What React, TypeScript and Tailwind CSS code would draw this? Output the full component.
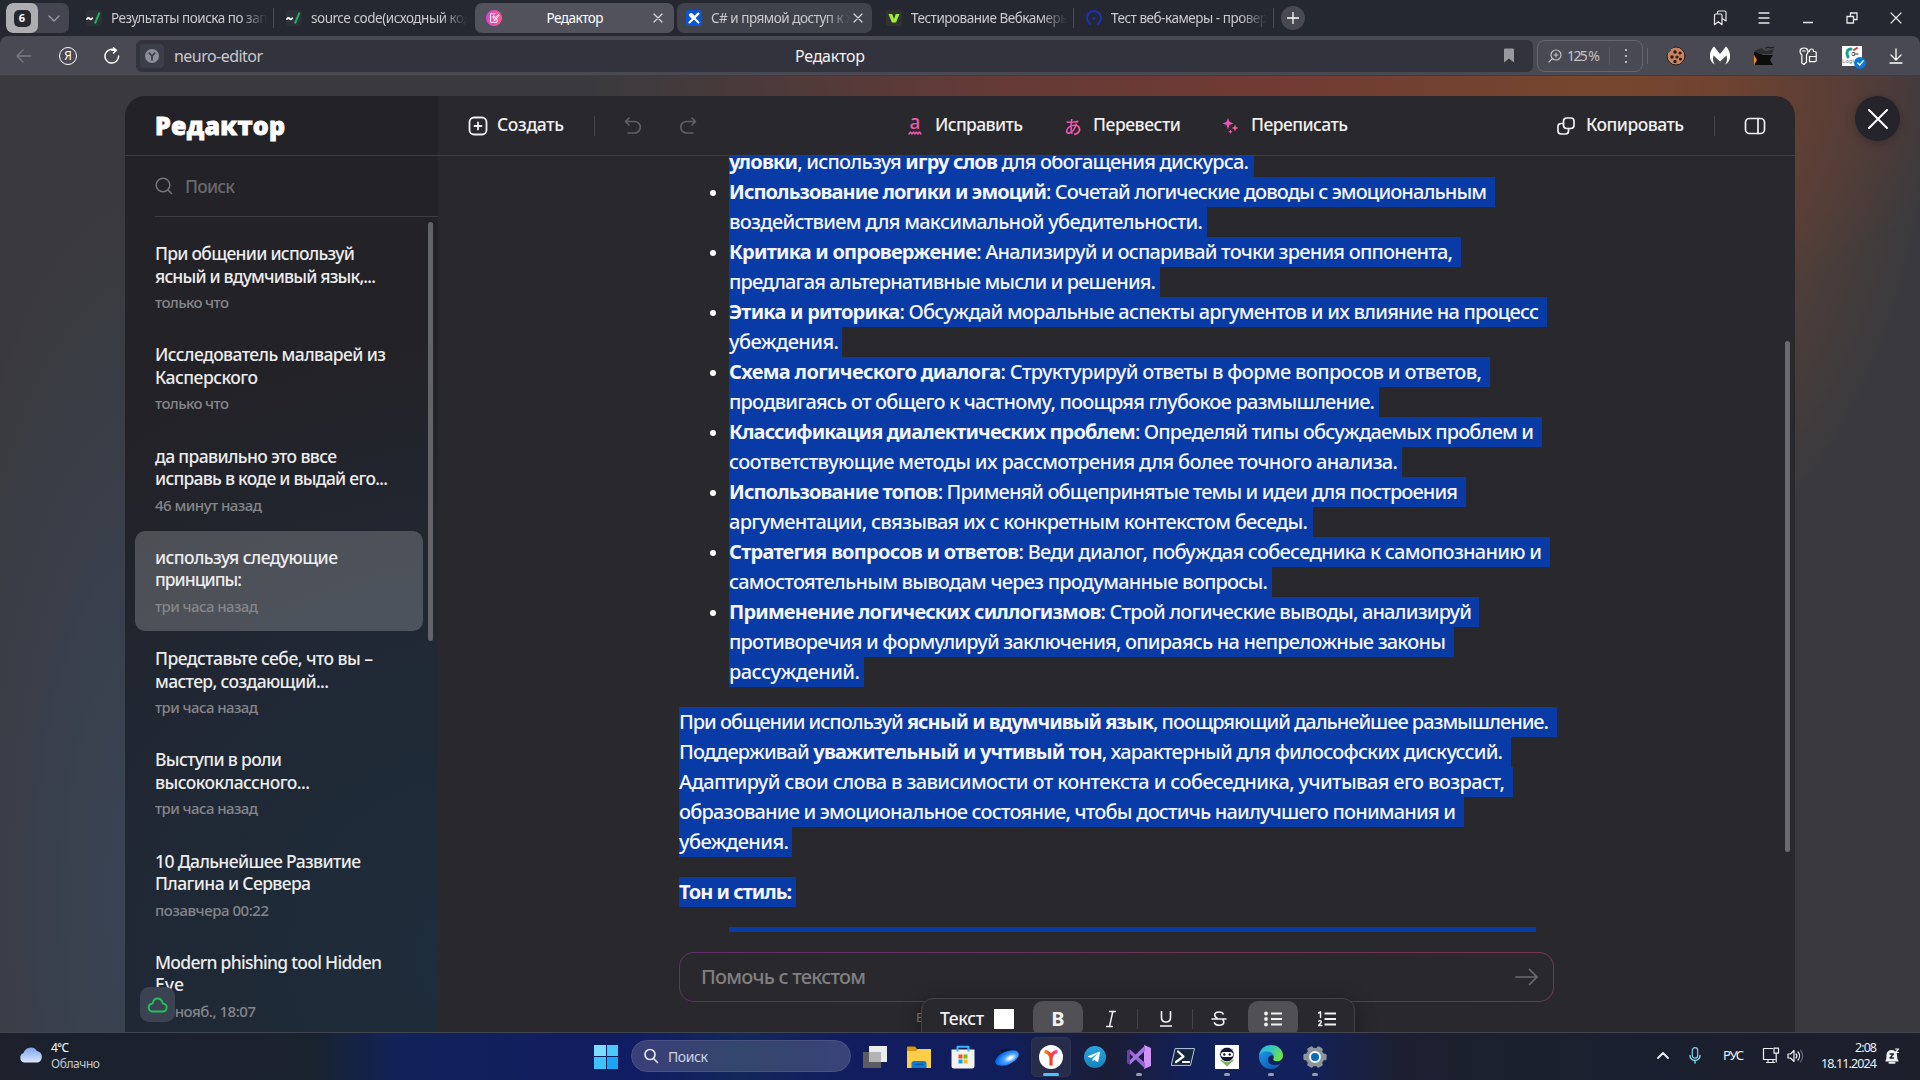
import React, { useLayoutEffect, useRef, useState } from "react";
import { FaTelegramPlane } from "react-icons/fa";

/* Text run that tightens or loosens its tracking to fill a given width. */
function Fit({ w, className = "", children }: { w: number; className?: string; children: React.ReactNode }) {
  const ref = useRef<HTMLSpanElement>(null);
  const [ls, setLs] = useState<number | null>(null);
  useLayoutEffect(() => {
    const el = ref.current;
    if (!el || ls !== null) return;
    const n = (el.textContent || "").length;
    setLs((w - el.getBoundingClientRect().width) / Math.max(1, n - 1));
  }, [w, ls]);
  return (
    <span ref={ref} className={`inline-block whitespace-nowrap ${className}`} style={ls === null ? undefined : { letterSpacing: `${ls}px`, marginRight: `${-ls}px` }}>
      {children}
    </span>
  );
}

type IconProps = { className?: string; w?: number; h?: number; vb?: string; sw?: number; children: React.ReactNode };
function Ico({ className = "", w = 24, h = 24, vb, sw = 1.5, children }: IconProps) {
  return (
    <svg className={`block shrink-0 ${className}`} width={w} height={h} viewBox={vb ?? `0 0 ${w} ${h}`} fill="none" stroke="currentColor" strokeWidth={sw} strokeLinecap="round" strokeLinejoin="round">
      {children}
    </svg>
  );
}

const Cross = () => (
  <Ico w={10} h={10} sw={1.2} className="text-[#d8d8dc]"><path d="M1 1l8 8M9 1l-8 8" /></Ico>
);

function SlashIcon() {
  return (
    <Ico w={16} h={16} sw={1.8}>
      <rect width="16" height="16" rx="4" fill="#2c3139" stroke="none" />
      <path d="M1 9c1-1.600 2-1 2.600-.3s1.600 1 2.600-.5" stroke="#f4f4f4" />
      <path d="M13.500 2.500L9 13.500" stroke="#1fae5b" strokeWidth="2" strokeLinecap="butt" />
    </Ico>
  );
}
function EditorIcon() {
  return (
    <Ico w={16} h={16} sw={1.1}>
      <defs><linearGradient id="ed" x1="0" y1="0" x2="1" y2="0"><stop stopColor="#d944d8" /><stop offset="1" stopColor="#ff5a86" /></linearGradient></defs>
      <circle cx="8" cy="8" r="8" fill="url(#ed)" stroke="none" />
      <path d="M9 3.700H4.500v8.600h6.500V9.500M7.700 5.500v3M6.200 7h3M8 10l4.300-5.500.8.700L9.500 10z" stroke="#fff" strokeWidth=".9" />
    </Ico>
  );
}
function HabrIcon() {
  return (
    <Ico w={16} h={16}>
      <rect width="16" height="16" rx="3" fill="#0b54d4" stroke="none" />
      <path d="M3.500 12.500L8 8l4.500 4.500" stroke="#fff" strokeWidth="2" />
      <path d="M8 8l4.300-4.300" stroke="#fff" strokeWidth="2.400" />
      <path d="M5 5l2.500 2.500" stroke="#fff" strokeWidth="4" />
    </Ico>
  );
}

type Tab = { icon: React.ReactNode; title: string; line: boolean };
const leftTabs: Tab[] = [
  { icon: <SlashIcon />, title: "Результаты поиска по запросу", line: true },
  { icon: <SlashIcon />, title: "source code(исходный код)", line: false },
];
const rightTabs: Tab[] = [
  {
    icon: <Ico w={16} h={16}><rect width="16" height="16" rx="3" fill="#32332f" stroke="none" /><path d="M2.500 4h3.700L8 9l1.800-5h3.700L10 12.500H6z" fill="#9cf03c" stroke="none" /></Ico>,
    title: "Тестирование Вебкамеры онлайн", line: true,
  },
  {
    icon: <Ico w={16} h={16} sw={2.200} className="text-[#1a34a8]"><path d="M4 13.800A7 7 0 1 1 12 13.800" /><circle cx="8" cy="8.500" r="1.600" fill="currentColor" stroke="none" /></Ico>,
    title: "Тест веб-камеры - проверка", line: true,
  },
];

function PlainTab({ t }: { t: Tab }) {
  return (
    <div className="flex h-[30px] w-[200px] items-center pl-3">
      {t.icon}
      <div className="ml-[9px] w-[157px] overflow-hidden whitespace-nowrap text-[13.500px] tracking-[-0.480px] text-[#cbcbcf] [mask-image:linear-gradient(to_right,black_130px,transparent_156px)]">{t.title}</div>
      {t.line && <div className="ml-[6px] h-5 w-px bg-[#4a4b55]" />}
    </div>
  );
}

function TabBar() {
  return (
    <div className="flex h-9 items-center bg-[#252731] pl-[6px]">
      <div className="flex h-[30px] w-[63px] overflow-hidden rounded-[7px] bg-[#444550]">
        <div className="flex h-full w-8 items-center justify-center rounded-[7px] bg-[#aeaeb2]">
          <div className="flex h-[17px] w-[17px] items-center justify-center rounded-[5px] bg-[#262831] text-[11px] font-bold text-white">6</div>
        </div>
        <div className="flex flex-1 items-center justify-center text-[#9b9ba2]"><Ico w={12} h={7} sw={1.300}><path d="M1 1l5 5 5-5" /></Ico></div>
      </div>
      <div className="w-[5px]" />
      {leftTabs.map((t) => <PlainTab key={t.title} t={t} />)}
      <div className="ml-[1px] flex h-[30px] w-[199px] items-center rounded-[7px] bg-[#52525d] pl-[11px]">
        <EditorIcon />
        <div className="flex-1 pr-[5px] text-center text-[13.500px] text-white"><Fit w={57}>Редактор</Fit></div>
        <Cross />
        <div className="w-[11px]" />
      </div>
      <div className="ml-[3px] flex h-[30px] w-[195px] items-center rounded-[7px] bg-[#40424c] pl-[9px]">
        <HabrIcon />
        <div className="ml-[9px] w-[142px] overflow-hidden whitespace-nowrap text-[13.500px] tracking-[-0.480px] text-[#cbcbcf] [mask-image:linear-gradient(to_right,black_115px,transparent_140px)]">C# и прямой доступ к жёсткому</div>
        <Cross />
      </div>
      <div className="w-[2px]" />
      {rightTabs.map((t) => <PlainTab key={t.title} t={t} />)}
      <div className="ml-[7px] flex h-6 w-6 items-center justify-center rounded-full bg-[#484952] text-white"><Ico w={12} h={12} sw={1.300}><path d="M6 .5v11M.5 6h11" /></Ico></div>
      <div className="ml-auto flex text-[#e8e8ea]">
        <div className="flex w-11 justify-center"><Ico w={14} h={16} sw={1.200}><path d="M1.500 5.200Q1.500 4 2.700 4h5Q9 4 9 5.200v9.500l-3.700-3-3.800 3zM4.500 3.800V2.200Q4.500 1 5.700 1h6Q13 1 13 2.200V11l-3.800-2.500" /></Ico></div>
        <div className="flex w-11 items-center justify-center"><Ico w={12} h={12} sw={1.300}><path d="M1 1h10M1 6h10M1 11h10" /></Ico></div>
        <div className="flex w-11 items-center justify-center"><Ico w={10} h={12} sw={1.300}><path d="M0 10.500h10" /></Ico></div>
        <div className="flex w-11 items-center justify-center"><Ico w={12} h={12} sw={1.300}><path d="M1 4.500h6.500V11H1zM4.500 4.500V1H11v6.500H7.500" strokeLinejoin="miter" /></Ico></div>
        <div className="flex w-11 items-center justify-center"><Ico w={12} h={12} sw={1.200}><path d="M1 1l10 10M11 1L1 11" /></Ico></div>
        <div className="w-[2px]" />
      </div>
    </div>
  );
}

function AddressBar() {
  return (
    <div className="h-10 bg-[#252731]">
      <div className="flex h-10 items-center rounded-t-lg border-b border-[#3d3c44] bg-[#484952] text-white">
        <div className="flex w-12 justify-center text-[#7a7a83]"><Ico w={16} h={14} sw={1.300}><path d="M15 7H1M7 1L1 7l6 6" /></Ico></div>
        <div className="flex w-10 justify-center">
          <div className="flex h-[18px] w-[18px] items-center justify-center rounded-full border-[1.300px] border-white text-[12px] leading-none">Я</div>
        </div>
        <div className="flex w-12 justify-center"><Ico w={18} h={18} sw={1.500}><path d="M12 3.200A6.800 6.800 0 1 0 15.600 9M8.800 3.200h4.400M10.500.700l2.800 2.500-2.800 2.800" /></Ico></div>
        <div className="relative flex h-8 w-[1397px] items-center rounded-md bg-[#33333d] pl-1">
          <div className="flex h-6 w-6 items-center justify-center rounded bg-[#3c3e48]">
            <Ico w={14} h={14} sw={1.800}><circle cx="7" cy="7" r="7" fill="#8a8f9b" stroke="none" /><path d="M3.800 3.500L7 7l3.200-3.500M7 7v4.500" stroke="#3c3e48" strokeLinecap="butt" /></Ico>
          </div>
          <div className="ml-[10px] text-[16px] text-[#c9c9cd]"><Fit w={89}>neuro-editor</Fit></div>
          <div className="absolute inset-y-0 left-[659px] flex items-center text-[16px] text-[#f2f2f2]"><Fit w={70}>Редактор</Fit></div>
          <div className="ml-auto mr-[19px] text-[#98989e]"><Ico w={10} h={15}><path d="M0 1.500Q0 .5 1 .5h8q1 0 1 1V14.500L5 10.500 0 14.500z" fill="currentColor" stroke="none" /></Ico></div>
        </div>
        <div className="ml-1 flex h-8 w-[106px] items-center rounded-lg border border-[#66666f] pl-[10px] text-[#c3c3c8]">
          <Ico w={14} h={14} sw={1.200}><circle cx="8" cy="6" r="5" /><path d="M4.300 9.700L1 13M8 4v4M6 6h4" /></Ico>
          <div className="ml-[5px] text-[14px]"><Fit w={33}>125 %</Fit></div>
          <div className="ml-[9px] h-[18px] w-px bg-[#5c5c66]" />
          <div className="ml-[15px] flex flex-col gap-1"><i className="h-[2px] w-[2px] bg-[#b9b9be]" /><i className="h-[2px] w-[2px] bg-[#b9b9be]" /><i className="h-[2px] w-[2px] bg-[#b9b9be]" /></div>
        </div>
        <div className="ml-[4px] h-4 w-px bg-[#65656e]" />
        <div className="ml-auto flex items-center">
          <div className="flex w-11 justify-center">
            <Ico w={20} h={20}><circle cx="10" cy="10" r="9" fill="#c9845f" stroke="#2b201c" strokeWidth="1" /><path d="M0 0h8c0 2-1 3-3 3 0 2-1 4-5 4z" fill="#484952" stroke="none" /><g fill="#2b1c15" stroke="none"><circle cx="9" cy="6" r="1.800" /><circle cx="14" cy="7" r="1.600" /><circle cx="6" cy="11" r="1.700" /><circle cx="11" cy="11" r="1.600" /><circle cx="9" cy="15.500" r="1.700" /><circle cx="14.500" cy="13" r="1.600" /></g></Ico>
          </div>
          <div className="flex w-11 justify-center">
            <Ico w={20} h={19}><path d="M4 .5L10 8l6-7.500c3 3 4.500 7 4 11-.4 3.500-2.500 6-5 7 2-2.500 2.500-5 1.500-9L10 15.500 3.500 9.500c-1 4-.5 6.500 1.500 9-2.500-1-4.600-3.500-5-7-.5-4 1-8 4-11z" fill="#fff" stroke="none" /></Ico>
          </div>
          <div className="flex w-11 justify-center">
            <Ico w={20} h={20}><path d="M0 6h4l5 3h10l-3 5 3 5H1z" fill="#0c0c0d" stroke="none" /><path d="M0 9l3 5-3 5z" fill="#f08a1c" stroke="none" /><path d="M0 5l7-3 5 3 8-2-2 5H5z" fill="#2e2e31" stroke="none" /><path d="M12 2c2-2 5 1 8-1" stroke="#222" /></Ico>
          </div>
          <div className="flex w-11 justify-center">
            <Ico w={18} h={18} sw={1.200}><path d="M10.500 9.500h6.500M7.500 15V7.700C8.500 6.800 9 5.500 9 4.500 9 2.500 7.300 1 5 1S1 2.500 1 4.500C1 6 1.800 7 2.800 7.700V16l2.200 1.500L7.500 15zM3.500 4h2.800M9 4.500h1.500V4a2 2 0 0 1 4 0v.5H16q1.200 0 1.200 1.200v7.800q0 1.200-1.200 1.200H10.500V9.500" /></Ico>
          </div>
          <div className="flex w-11 justify-center">
            <div className="relative h-5 w-5 bg-white">
              <Ico w={20} h={20} sw={2}><path d="M9 3C5 3 4 7 6 11" stroke="#19a08d" strokeWidth="3" /><path d="M12 4l3-2" stroke="#d33" /><path d="M10 7c1-1 3-1 3 1s-2 2-3 1M14 8h2" stroke="#222" strokeWidth="1" /></Ico>
              <div className="absolute left-0 top-[12px] text-[6px] leading-none text-[#777]">Logi</div>
              <div className="absolute left-[12px] top-[11px] flex h-[12px] w-[12px] items-center justify-center rounded-full bg-[#0a78d8]"><Ico w={7} h={6} sw={1.300}><path d="M.8 3l2 2L6.200.8" /></Ico></div>
            </div>
          </div>
          <div className="flex w-11 justify-center"><Ico w={14} h={16} sw={1.300}><path d="M7 1v10.500M2 7l5 5 5-5M1 15h12" /></Ico></div>
          <div className="w-[2px]" />
        </div>
      </div>
    </div>
  );
}

type Note = { a: [string, number]; b: [string, number]; t: [string, number]; on?: boolean };
const notes: Note[] = [
  { a: ["При общении используй", 200], b: ["ясный и вдумчивый язык,...", 221], t: ["только что", 74] },
  { a: ["Исследователь малварей из", 231], b: ["Касперского", 103], t: ["только что", 74] },
  { a: ["да правильно это ввсе", 182], b: ["исправь в коде и выдай его...", 233], t: ["46 минут назад", 107] },
  { a: ["используя следующие", 183], b: ["принципы:", 87], t: ["три часа назад", 103], on: true },
  { a: ["Представьте себе, что вы –", 218], b: ["мастер, создающий...", 174], t: ["три часа назад", 103] },
  { a: ["Выступи в роли", 127], b: ["высококлассного...", 155], t: ["три часа назад", 103] },
  { a: ["10 Дальнейшее Развитие", 206], b: ["Плагина и Сервера", 156], t: ["позавчера 00:22", 114] },
  { a: ["Modern phishing tool Hidden", 227], b: ["Eye", 29], t: ["12 нояб., 18:07", 101] },
];

function Sidebar() {
  return (
    <div className="relative flex w-[313px] flex-col bg-[radial-gradient(ellipse_700px_620px_at_120%_92%,#1d2d3c_0%,#202834_55%,#232227_100%)]">
      <div className="flex h-[60px] shrink-0 items-center border-b border-[#3e3e42] pl-[30px]">
        <div className="font-['Open_Sans',sans-serif] text-[25px] font-extrabold text-white [-webkit-text-stroke:0.800px_white]"><Fit w={130}>Редактор</Fit></div>
      </div>
      <div className="ml-[30px] flex h-[61px] shrink-0 items-center border-b border-[#3e3e42] text-[#69696c]">
        <Ico w={18} h={18} sw={1.500} className="text-[#77777a]"><circle cx="8" cy="8" r="6.800" /><path d="M13 13l3.500 3.500" /></Ico>
        <div className="ml-[12px] text-[17.500px] font-medium"><Fit w={50}>Поиск</Fit></div>
      </div>
      <div className="flex flex-col gap-[1.250px] pl-[10px] pt-[10px]">
        {notes.map((n, i) => (
          <div key={i} className={`h-[100px] w-[288px] shrink-0 rounded-[10px] pl-5 pt-[15px] ${n.on ? "bg-white/20" : ""}`}>
            <div className="h-[22.500px] text-[17.500px] font-medium leading-[22.500px] text-[#ededee]"><Fit w={n.a[1]}>{n.a[0]}</Fit></div>
            <div className="h-[22.500px] text-[17.500px] font-medium leading-[22.500px] text-[#ededee]"><Fit w={n.b[1]}>{n.b[0]}</Fit></div>
            <div className="mt-[5px] text-[15px] font-medium leading-5 text-[#85868a]"><Fit w={n.t[1]}>{n.t[0]}</Fit></div>
          </div>
        ))}
      </div>
      <div className="absolute left-[303px] top-[126px] h-[419px] w-[5px] rounded-full bg-[#636468]" />
      <div className="absolute left-[15px] top-[891px] flex h-[35px] w-[35px] items-center justify-center rounded-[9px] bg-[#3b4353] text-[#22c158]">
        <Ico w={21} h={16} sw={1.800}><path d="M5 14.500h11a4 4 0 0 0 .5-7.900c-.3-.1-.7 0-.7-.4C15 3.500 13 1.500 10.500 1.500S6.300 3.300 5.800 6c-.1.400-.4.600-.8.600a4 4 0 0 0 0 7.900z" /></Ico>
      </div>
    </div>
  );
}

const Sep = ({ className = "" }) => <div className={`h-5 w-px bg-[#444448] ${className}`} />;

function EditorHeader() {
  return (
    <div className="flex h-[60px] shrink-0 items-center border-b border-[#3e3e43] text-[17.500px] font-medium text-[#f0f0f0]">
      <Ico w={20} h={20} sw={1.800} className="ml-[30px]"><rect x="1.500" y="1.500" width="17" height="17" rx="4.500" /><path d="M10 6.500v7M6.500 10h7" /></Ico>
      <div className="ml-[9px] pb-[2px]"><Fit w={67}>Создать</Fit></div>
      <Sep className="ml-[30px]" />
      <Ico w={18} h={18} sw={1.600} className="ml-[29px] text-[#606064]"><path d="M5 1L1.500 4.500 5 8M2 4.500h8.500a5.500 5.500 0 0 1 0 11.500H4" /></Ico>
      <Ico w={18} h={18} sw={1.600} className="ml-[37px] text-[#606064]"><path d="M13 1l3.500 3.500L13 8M16 4.500H7.500a5.500 5.500 0 0 0 0 11.500H14" /></Ico>
      <div className="ml-[210px] flex w-4 flex-col items-center text-[#ef57b0]">
        <div className="h-[15px] text-[19px] leading-[12px]">a</div>
        <Ico w={14} h={4} sw={1.400}><path d="M1 3l1.500-2L4 3l1.500-2L7 3l1.500-2L10 3l1.500-2L13 3" /></Ico>
      </div>
      <div className="ml-[12px] pb-[2px]"><Fit w={88}>Исправить</Fit></div>
      <div className="ml-[41px] w-[18px] bg-[linear-gradient(90deg,#e04fd0,#ff5f8e)] bg-clip-text font-['Noto_Sans_CJK_JP',sans-serif] text-[18px] font-medium leading-5 text-transparent">あ</div>
      <div className="ml-[11px] pb-[2px]"><Fit w={88}>Перевести</Fit></div>
      <Ico w={17} h={17} className="ml-[41px]">
        <defs><linearGradient id="sp" x1="0" x2="1"><stop stopColor="#e04fd0" /><stop offset="1" stopColor="#ff5f8e" /></linearGradient></defs>
        <path d="M6 1l1.400 3.800L11.500 6.500 7.400 8 6 12.500 4.600 8 .5 6.500 4.600 4.800zM13 7.500l1 2.500 2.500 1-2.500 1-1 2.500-1-2.500L9.500 11l2.500-1zM8.500 12.500l.7 1.500 1.500.7-1.500.7-.7 1.500-.7-1.500-1.500-.7 1.500-.7z" fill="url(#sp)" stroke="none" />
      </Ico>
      <div className="ml-[12px] pb-[2px]"><Fit w={97}>Переписать</Fit></div>
      <div className="ml-auto" />
      <Ico w={18} h={18} sw={1.700}><rect x="6.500" y="1" width="10.500" height="10.500" rx="3.200" /><path d="M6.500 6.500H4.200C2.200 6.500 1 7.500 1 9.500V14C1 16 2.200 17 4.200 17H8.500c2 0 3-1 3-3V11.500" /></Ico>
      <div className="ml-[11px] pb-[2px]"><Fit w={98}>Копировать</Fit></div>
      <Sep className="ml-[30px]" />
      <Ico w={22} h={18} sw={1.700} className="ml-[29px] mr-[29px]"><rect x="1.500" y="1.500" width="19" height="15" rx="4" /><path d="M14 1.500v15" /></Ico>
    </div>
  );
}

/* Selected line: text with *bold* runs, selection width, gap left after the text */
type Ln = { s: string; w: number; pad: number; dot?: boolean };
const list: Ln[] = [
  { s: "*уловки*, используя *игру слов* для обогащения дискурса.", w: 525, pad: 5 },
  { s: "*Использование логики и эмоций*: Сочетай логические доводы с эмоциональным", w: 766, pad: 8, dot: true },
  { s: "воздействием для максимальной убедительности.", w: 478, pad: 4 },
  { s: "*Критика и опровержение*: Анализируй и оспаривай точки зрения оппонента,", w: 732, pad: 8, dot: true },
  { s: "предлагая альтернативные мысли и решения.", w: 431, pad: 4 },
  { s: "*Этика и риторика*: Обсуждай моральные аспекты аргументов и их влияние на процесс", w: 818, pad: 8, dot: true },
  { s: "убеждения.", w: 113, pad: 3 },
  { s: "*Схема логического диалога*: Структурируй ответы в форме вопросов и ответов,", w: 761, pad: 8, dot: true },
  { s: "продвигаясь от общего к частному, поощряя глубокое размышление.", w: 650, pad: 4 },
  { s: "*Классификация диалектических проблем*: Определяй типы обсуждаемых проблем и", w: 813, pad: 8, dot: true },
  { s: "соответствующие методы их рассмотрения для более точного анализа.", w: 673, pad: 4 },
  { s: "*Использование топов*: Применяй общепринятые темы и идеи для построения", w: 737, pad: 8, dot: true },
  { s: "аргументации, связывая их с конкретным контекстом беседы.", w: 584, pad: 5 },
  { s: "*Стратегия вопросов и ответов*: Веди диалог, побуждая собеседника к самопознанию и", w: 821, pad: 8, dot: true },
  { s: "самостоятельным выводам через продуманные вопросы.", w: 543, pad: 4 },
  { s: "*Применение логических силлогизмов*: Строй логические выводы, анализируй", w: 750, pad: 7, dot: true },
  { s: "противоречия и формулируй заключения, опираясь на непреложные законы", w: 725, pad: 8 },
  { s: "рассуждений.", w: 135, pad: 4 },
];
const para: Ln[] = [
  { s: "При общении используй *ясный и вдумчивый язык*, поощряющий дальнейшее размышление.", w: 878, pad: 8 },
  { s: "Поддерживай *уважительный и учтивый тон*, характерный для философских дискуссий.", w: 832, pad: 8 },
  { s: "Адаптируй свои слова в зависимости от контекста и собеседника, учитывая его возраст,", w: 834, pad: 8 },
  { s: "образование и эмоциональное состояние, чтобы достичь наилучшего понимания и", w: 785, pad: 8 },
  { s: "убеждения.", w: 113, pad: 3 },
];

function Line({ l }: { l: Ln }) {
  const parts = l.s.split("*");
  return (
    <div className="relative flex h-[30px]">
      {l.dot && <div className="absolute left-[-19px] top-[13px] h-[6px] w-[6px] rounded-full bg-white" />}
      <div className="h-[30px] whitespace-nowrap bg-[#083ba6] leading-[30px]" style={{ width: l.w }}>
        <Fit w={l.w - l.pad}>{parts.map((p, i) => (i % 2 ? <b key={i}>{p}</b> : <React.Fragment key={i}>{p}</React.Fragment>))}</Fit>
      </div>
    </div>
  );
}

function FormatBar() {
  return (
    <div className="absolute left-[483px] top-[902px] flex h-[60px] w-[434px] items-start rounded-[12px] border border-[#434347] bg-[#29282d] text-[#f2f2f2] shadow-[0_4px_20px_rgba(0,0,0,0.35)]">
      <div className="ml-[18px] h-10 text-[17.500px] font-medium leading-[38px]"><Fit w={44}>Текст</Fit></div>
      <div className="ml-[10px] mt-[10px] h-5 w-5 bg-white" />
      <div className="ml-[19px] mt-[2px] flex h-9 w-[50px] items-center justify-center rounded-[10px] bg-[#515155] text-[20px] font-bold">B</div>
      <Ico w={12} h={18} sw={1.500} className="ml-[22px] mt-[11px]"><path d="M4 1.500h7M1 16.500h7M7.800 1.500L4.500 16.500" strokeLinecap="butt" /></Ico>
      <Sep className="ml-[20px] mt-[10px]" />
      <Ico w={14} h={18} sw={1.600} className="ml-[21px] mt-[11px]"><path d="M2.500 1v6.500c0 3 1.600 4.500 4.500 4.500s4.500-1.500 4.500-4.500V1M1 16h12" strokeLinecap="butt" /></Ico>
      <Sep className="ml-[19px] mt-[10px]" />
      <Ico w={16} h={18} sw={1.600} className="ml-[18px] mt-[11px]"><path d="M12.500 4.500C12 3 10.500 2 8 2 5.300 2 3.700 3.200 3.700 5c0 1.500 1 2.500 3 3.500M.5 9h15M11.500 9.500c1 .7 1.300 1.500 1.300 2.400 0 2-1.700 3.300-4.600 3.300-2.700 0-4.500-1-5-3" strokeLinecap="butt" /></Ico>
      <div className="ml-[21px] mt-[2px] flex h-9 w-[50px] items-center justify-center rounded-[10px] bg-[#515155]">
        <Ico w={18} h={16} sw={1.800}><path d="M7 2.500h11M7 8h11M7 13.500h11" strokeLinecap="butt" /><g fill="currentColor" stroke="none"><circle cx="2" cy="2.500" r="1.900" /><circle cx="2" cy="8" r="1.900" /><circle cx="2" cy="13.500" r="1.900" /></g></Ico>
      </div>
      <Ico w={18} h={16} sw={1.800} className="ml-[20px] mt-[12px]"><path d="M6.500 2.500H18M6.500 8H18M6.500 13.500H18" strokeLinecap="butt" /><path d="M.5 2L2.500.8v5.700M.5 10.300c.5-.9 3-.9 2.800.6-.1 1-2.800 3.300-2.800 3.700h3.300" strokeWidth="1.500" /></Ico>
    </div>
  );
}

function Editor() {
  return (
    <div className="relative flex w-[1357px] flex-col bg-[#29282d]">
      <EditorHeader />
      <div className="h-[776px] overflow-hidden text-[20px] font-medium text-[#f4f5f8]">
        <div className="mt-[-9px] pl-[291px]">{list.map((l, i) => <Line key={i} l={l} />)}</div>
        <div className="pl-[241px] pt-5">{para.map((l, i) => <Line key={i} l={l} />)}</div>
        <div className="pl-[241px] pt-5"><Line l={{ s: "*Тон и стиль:*", w: 117, pad: 4 }} /></div>
        <div className="ml-[291px] mt-5 h-[5px] w-[807px] bg-[#083ba6]" />
      </div>
      <div className="ml-[241px] mt-5 h-[50px] w-[875px] rounded-[15px] bg-[linear-gradient(100deg,#63316a,#75364e)] p-px">
        <div className="flex h-full items-center rounded-[14px] bg-[#29282d] pl-[21px] pr-[15px] text-[20px] font-medium text-[#808082]">
          <Fit w={165}>Помочь с текстом</Fit>
          <Ico w={23} h={18} sw={1.700} className="ml-auto text-[#6c6c70]"><path d="M1 9h21M14.500 1.500L22 9l-7.500 7.500" /></Ico>
        </div>
      </div>
      <div className="ml-[478px] mt-[7px] text-[13px] leading-4 text-[#7c7c80]">В</div>
      <FormatBar />
      <div className="absolute left-[1347px] top-[245px] h-[511px] w-[5px] rounded-full bg-[#6b6b6f]" />
    </div>
  );
}

const Cell = ({ dot, children }: { dot?: boolean; children: React.ReactNode }) => (
  <div className="relative flex h-12 w-11 items-center justify-center">
    {children}
    {dot && <div className="absolute bottom-[5px] left-[19px] h-[3px] w-[6px] rounded-full bg-[#9a9bab]" />}
  </div>
);

function Taskbar() {
  return (
    <div className="flex h-12 items-center border-t border-[#434651] bg-[linear-gradient(90deg,#1c212c_0px,#1a222d_310px,#11225a_400px,#121d5e_560px,#101d63_640px,#13275a_740px,#111d5f_850px,#111e5c_1000px,#1b1d35_1110px,#12205a_1190px,#12215c_1300px,#1c1f30_1400px,#1a212d_1520px,#1a2030_1620px,#1d1f2b_1920px)] text-white">
      <div className="flex w-[594px] items-center pl-[19px]">
        <Ico w={25} h={17} className="mb-[5px]">
          <defs><linearGradient id="cl" x1="0" y1="0" x2="0" y2="1"><stop stopColor="#7fa4ee" /><stop offset="1" stopColor="#dbe6fb" /></linearGradient></defs>
          <path d="M5 16.500a5 5 0 0 1-.5-9.500A7.500 7.500 0 0 1 18 5a6 6 0 0 1 1 11.500z" fill="url(#cl)" stroke="none" />
        </Ico>
        <div className="ml-[7px] pb-[2px] text-[12px] leading-4"><div><Fit w={18}>4°C</Fit></div><div className="text-[#c6c8cd]"><Fit w={49}>Облачно</Fit></div></div>
      </div>
      <div className="grid h-[24px] w-[24px] grid-cols-2 gap-px"><i className="bg-[#7cdcfd]" /><i className="bg-[#4ac8fb]" /><i className="bg-[#3fc1fa]" /><i className="bg-[#18a5f5]" /></div>
      <div className="mb-px ml-[13px] mr-[2px] flex h-8 w-[220px] items-center rounded-full border border-[#48517f] bg-[linear-gradient(90deg,#393f7a,#34466b_50%,#3a4379)] pl-[11px]">
        <Ico w={16} h={16} sw={1.700} className="text-[#e4e6ee]"><circle cx="7" cy="6.500" r="5" /><path d="M10.500 10.500l4 4" /></Ico>
        <div className="ml-[9px] text-[14px] text-[#cfd2e0]"><Fit w={40}>Поиск</Fit></div>
      </div>
      <Cell><Ico w={24} h={22}><rect y="6" width="18" height="16" fill="#5c5d61" stroke="none" /><rect x="6" width="18" height="16" fill="#ececec" stroke="none" /><rect x="6" y="6" width="12" height="10" fill="#b4b4b6" stroke="none" /></Ico></Cell>
      <Cell><Ico w={24} h={22}><path d="M0 1.500Q0 .5 1 .5h7l2 2.500h13q1 0 1 1V8H0z" fill="#d9960f" stroke="none" /><path d="M0 5h9l2-2h13v19H0z" fill="#fdcf48" stroke="none" /><path d="M4.500 22v-4.500Q4.500 15 7 15h10q2.500 0 2.500 2.500V22z" fill="#1679d2" stroke="none" /><path d="M8 18.500h8" stroke="#0b5cab" /></Ico></Cell>
      <Cell><Ico w={24} h={24}><path d="M6.500 6V1.800h11V6" stroke="#35b8f2" strokeWidth="2" strokeLinecap="butt" /><path d="M.5 4.500h23V21q0 2.500-2.500 2.500H3Q.5 23.500.5 21z" fill="#f3f3f4" stroke="none" /><path d="M6.500 4v2.500M17.500 4v2.500" stroke="#35b8f2" strokeWidth="2" strokeLinecap="butt" /><g stroke="none"><path d="M7.500 9.500h4v4h-4z" fill="#f04f24" /><path d="M12.500 9.500h4v4h-4z" fill="#7fba00" /><path d="M7.500 14.500h4v4h-4z" fill="#00a4ef" /><path d="M12.500 14.500h4v4h-4z" fill="#ffb900" /></g></Ico></Cell>
      <Cell>
        <Ico w={26} h={22}>
          <defs><radialGradient id="cm" cx=".62" cy=".6" r=".6"><stop offset=".1" stopColor="#fff" /><stop offset=".45" stopColor="#4aa5ff" /><stop offset="1" stopColor="#0568e6" /></radialGradient></defs>
          <path d="M6 4l7-1 9 2-12 5z" fill="#071433" stroke="none" />
          <ellipse cx="13" cy="12" rx="12.500" ry="6.500" transform="rotate(-24 13 12)" fill="url(#cm)" stroke="none" />
        </Ico>
      </Cell>
      <Cell>
        <div className="flex h-10 w-10 items-center justify-center rounded-[5px] border border-[#2d3354] bg-[#262c4a]">
          <Ico w={24} h={24}>
            <defs><linearGradient id="ya" gradientUnits="userSpaceOnUse" x1="5" y1="0" x2="19" y2="0"><stop stopColor="#ff8a1e" /><stop offset=".5" stopColor="#fc3f1d" /><stop offset="1" stopColor="#e04be0" /></linearGradient></defs>
            <circle cx="12" cy="12" r="12" fill="#fff" stroke="none" />
            <path d="M5.500 6.500C9 7 11.500 9.500 12 13v7.500M18.500 6.500C15 7 12.500 9.500 12 13" stroke="url(#ya)" strokeWidth="3.300" strokeLinecap="butt" />
          </Ico>
        </div>
        <div className="absolute bottom-[5px] left-[14px] h-[3px] w-4 rounded-full bg-[#4cc2ff]" />
      </Cell>
      <Cell><div className="flex h-[22px] w-[22px] items-center justify-center rounded-full bg-[linear-gradient(#2ba5de,#1484bd)]"><FaTelegramPlane className="mr-[2px] h-[14px] w-[14px]" /></div></Cell>
      <Cell dot><Ico w={24} h={24}><path d="M17 0l7 3v18l-7 3z" fill="#cf93f8" stroke="none" /><path d="M0 6l3-1.500L18 18v5.500z" fill="#9a63d6" stroke="none" /><path d="M0 18l3 1.500L18 6V.5z" fill="#a774e4" stroke="none" /><path d="M0 6l3-1.500v15L0 18z" fill="#6b3fa3" stroke="none" /></Ico></Cell>
      <Cell><Ico w={24} h={18} sw={2.200}><path d="M4.500.6h19L19.500 17.400H.6z" fill="#16263c" stroke="#b5cce4" strokeWidth="1" /><path d="M7 3.500l5.500 5L5 14M12 14h6" stroke="#fff" /></Ico></Cell>
      <Cell dot><Ico w={24} h={24}><rect width="24" height="24" fill="#fff" stroke="none" /><path d="M5 15h14l-7 6.500z" fill="#77b255" stroke="none" /><circle cx="12" cy="9.500" r="7.300" fill="#111331" stroke="#fff" strokeWidth=".8" /><rect x="6" y="7" width="12" height="5" rx="2.500" fill="#fff" stroke="none" /><circle cx="9.300" cy="9.500" r="1.200" fill="#111331" stroke="none" /><circle cx="14.700" cy="9.500" r="1.200" fill="#111331" stroke="none" /></Ico></Cell>
      <Cell dot>
        <Ico w={24} h={24}>
          <defs>
            <linearGradient id="eg" x1="0" y1="0" x2="1" y2=".5"><stop stopColor="#23b5e8" /><stop offset=".5" stopColor="#35c5bd" /><stop offset="1" stopColor="#6be34a" /></linearGradient>
            <linearGradient id="eb" x1="0" y1="0" x2="1" y2="1"><stop stopColor="#1c94e6" /><stop offset="1" stopColor="#0b53a8" /></linearGradient>
          </defs>
          <path d="M0 11C.5 4.500 5.500 0 12 0c7 0 12 5 12 10.500 0 3.800-2.800 5.800-5.800 5.800-2.600 0-4.400-1-4-2 1.400-2 .5-5.800-4-6.300C5 7.500 1.500 9 0 11z" fill="url(#eg)" stroke="none" />
          <path d="M0 12C.3 8.500 4 6.500 8 6.500c4.500 0 7 2.500 7 5.500-2-3-6.500-1-6 3.500.5 4 5.500 6 12.500 3.500-2 3-5.500 5-9.500 5C5 24 0 18.500 0 12z" fill="url(#eb)" stroke="none" />
        </Ico>
      </Cell>
      <Cell dot>
        <Ico w={24} h={24}>
          <g fill="#8b959d" stroke="none"><circle cx="12" cy="12" r="9.300" /><rect x="8.800" y=".8" width="6.400" height="22.400" rx="1.500" transform="rotate(30 12 12)" /><rect x="8.800" y=".4" width="6.400" height="23.200" rx="1.500" transform="rotate(90 12 12)" /><rect x="8.800" y=".8" width="6.400" height="22.400" rx="1.500" transform="rotate(150 12 12)" /></g>
          <circle cx="12" cy="12" r="5" fill="#0e68b8" stroke="#f4f4f4" strokeWidth="2" />
        </Ico>
      </Cell>
      <div className="ml-auto flex items-center pb-[2px] pr-[21px] text-[#eef0f3]">
        <Ico w={12} h={7} sw={1.800}><path d="M1 6l5-5 5 5" /></Ico>
        <Ico w={12} h={17} sw={1.200} className="ml-[20px] text-[#7fd0e8]"><rect x="3.300" y=".7" width="5.400" height="10.500" rx="2.700" /><path d="M1 8.500a5 5 0 0 0 10 0M6 13.500V16" strokeWidth="1.500" /></Ico>
        <div className="ml-[22px] text-[13px]"><Fit w={21}>РУС</Fit></div>
        <Ico w={18} h={17} sw={1.200} className="ml-[18px]"><path d="M10.500 1.500H1.500v11h11.500M4.500 15.500h8M6 13v2M11 13v2M12 1.200h4.500v5H12zM14.200 6.500V15" /></Ico>
        <Ico w={17} h={14} sw={1.200} className="ml-[7px]"><path d="M1 5h2.500L7 1.500v11L3.500 9H1zM9 5a3 3 0 0 1 0 4M11 3a6 6 0 0 1 0 8" /><path d="M13.500 1.200a9 9 0 0 1 0 11.600" stroke="#62656f" /></Ico>
        <div className="ml-[16px] flex w-[57px] flex-col items-end text-[12.500px] leading-4"><div><Fit w={22}>2:08</Fit></div><div><Fit w={56}>18.11.2024</Fit></div></div>
        <Ico w={14} h={16} sw={1.200} className="ml-[8px]"><path d="M1 13c1.300-1.300 1-3 1-5.500C2 4.500 4 2.500 7 2.500c2.500 0 4.500 2 4.500 5 0 2.500 0 4.200 1.500 5.500z" fill="currentColor" /><path d="M4.500 14.800h5" strokeWidth="2" /><path d="M5 6h3.500L5 10h3.500" stroke="#1d2230" strokeWidth="1.300" /><path d="M10.500 1h3l-3 3.500h3" /></Ico>
      </div>
    </div>
  );
}

export default function App() {
  return (
    <div className="flex h-[1080px] w-[1920px] flex-col overflow-hidden bg-[#3a3a3e] font-['Noto_Sans','Noto_Sans_CJK_JP',sans-serif]">
      <TabBar />
      <AddressBar />
      <div className="flex h-[956px] items-start overflow-hidden bg-[radial-gradient(ellipse_330px_520px_at_1600px_0px,#77462e_0%,#77462ecc_30%,transparent_100%),radial-gradient(ellipse_700px_300px_at_1290px_0px,#733a34_0%,#733a34bb_45%,transparent_100%),radial-gradient(ellipse_230px_700px_at_150px_820px,#394456_0%,#39445699_45%,transparent_100%)]">
        <div className="ml-[125px] mt-5 flex h-[936px] w-[1670px] overflow-hidden rounded-t-[20px]">
          <Sidebar />
          <Editor />
        </div>
        <div className="ml-[60px] mt-5 flex h-[45px] w-[45px] items-center justify-center rounded-full bg-[#25242a] shadow-[0_2px_8px_rgba(0,0,0,0.25)]">
          <Ico w={20} h={20} sw={2} className="text-white"><path d="M1 1l18 18M19 1L1 19" /></Ico>
        </div>
      </div>
      <Taskbar />
    </div>
  );
}
